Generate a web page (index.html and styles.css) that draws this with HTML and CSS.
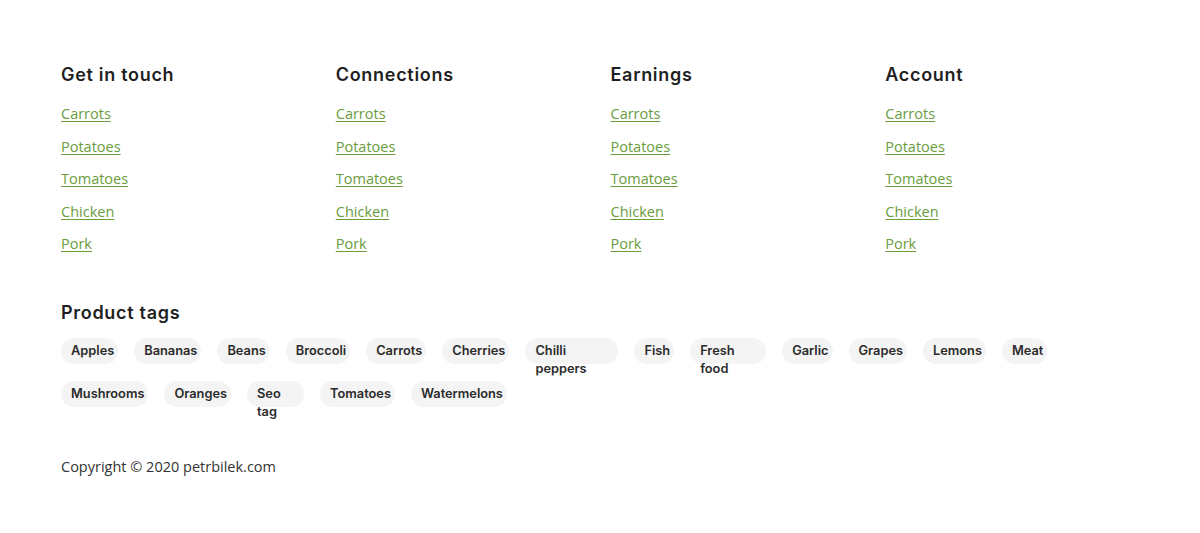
FILE: index.html
```html
<!DOCTYPE html>
<html lang="en">
<head>
<meta charset="utf-8">
<title>Footer</title>
<link rel="stylesheet" href="styles.css">
</head>
<body>
<footer class="footer">
  <div class="cols">
    <section class="col">
      <h3 class="col-title">Get in touch</h3>
      <ul class="links">
        <li><a href="#">Carrots</a></li>
        <li><a href="#">Potatoes</a></li>
        <li><a href="#">Tomatoes</a></li>
        <li><a href="#">Chicken</a></li>
        <li><a href="#">Pork</a></li>
      </ul>
    </section>
    <section class="col">
      <h3 class="col-title">Connections</h3>
      <ul class="links">
        <li><a href="#">Carrots</a></li>
        <li><a href="#">Potatoes</a></li>
        <li><a href="#">Tomatoes</a></li>
        <li><a href="#">Chicken</a></li>
        <li><a href="#">Pork</a></li>
      </ul>
    </section>
    <section class="col">
      <h3 class="col-title">Earnings</h3>
      <ul class="links">
        <li><a href="#">Carrots</a></li>
        <li><a href="#">Potatoes</a></li>
        <li><a href="#">Tomatoes</a></li>
        <li><a href="#">Chicken</a></li>
        <li><a href="#">Pork</a></li>
      </ul>
    </section>
    <section class="col">
      <h3 class="col-title">Account</h3>
      <ul class="links">
        <li><a href="#">Carrots</a></li>
        <li><a href="#">Potatoes</a></li>
        <li><a href="#">Tomatoes</a></li>
        <li><a href="#">Chicken</a></li>
        <li><a href="#">Pork</a></li>
      </ul>
    </section>
  </div>

  <section class="tags-block">
    <h3 class="tags-title">Product tags</h3>
    <div class="tag-row">
      <a class="tag" href="#">Apples</a>
      <a class="tag" href="#">Bananas</a>
      <a class="tag" href="#">Beans</a>
      <a class="tag" href="#">Broccoli</a>
      <a class="tag" href="#">Carrots</a>
      <a class="tag" href="#">Cherries</a>
      <a class="tag tag-wrap tag-w93" href="#">Chilli peppers</a>
      <a class="tag" href="#">Fish</a>
      <a class="tag tag-wrap tag-w76" href="#">Fresh food</a>
      <a class="tag" href="#">Garlic</a>
      <a class="tag" href="#">Grapes</a>
      <a class="tag" href="#">Lemons</a>
      <a class="tag" href="#">Meat</a>
    </div>
    <div class="tag-row">
      <a class="tag" href="#">Mushrooms</a>
      <a class="tag" href="#">Oranges</a>
      <a class="tag tag-wrap tag-w57" href="#">Seo tag</a>
      <a class="tag" href="#">Tomatoes</a>
      <a class="tag" href="#">Watermelons</a>
    </div>
  </section>

  <p class="copyright">Copyright © 2020 petrbilek.com</p>
</footer>
</body>
</html>
```

FILE: styles.css
```css
* { box-sizing: border-box; }

body {
  margin: 0;
  background: #ffffff;
  font-family: "Open Sans", "Liberation Sans", sans-serif;
  color: #333333;
}

.footer {
  padding: 61px 61px 0 61px;
}

.cols {
  display: grid;
  grid-template-columns: repeat(4, 274.75px);
}

.col-title,
.tags-title {
  margin: 0;
  font-family: Inter, "Liberation Sans", sans-serif;
  font-size: 18px;
  line-height: 27px;
  font-weight: 600;
  color: #1f1f1f;
  letter-spacing: 0.7px;
}

.col-title {
  margin-bottom: 16px;
}

.links {
  list-style: none;
  margin: 0;
  padding: 0;
  display: flex;
  flex-direction: column;
  gap: 12.6px;
}

.links li {
  line-height: 20px;
  font-size: 14.5px;
}

.links a {
  color: #6a9c3e;
  text-decoration: underline;
  text-underline-offset: 2px;
}

.tags-block {
  margin-top: 45px;
}

.tags-title {
  margin-bottom: 12px;
}

.tag-row {
  display: flex;
  align-items: flex-start;
}

.tag-row + .tag-row {
  margin-top: 1px;
}

.tag {
  flex: none;
  height: 26px;
  margin: 0 16px 16px 0;
  padding: 4px 4px 0 10px;
  border-radius: 13px;
  background: #f4f4f4;
  font-family: Inter, "Liberation Sans", sans-serif;
  font-size: 12.8px;
  line-height: 18px;
  font-weight: 600;
  color: #2b2b2b;
  text-decoration: none;
  white-space: nowrap;
}

.tag-wrap {
  white-space: normal;
}

.tag-w93 { width: 93px; }
.tag-w76 { width: 76px; }
.tag-w57 { width: 57px; }

.copyright {
  margin: 34px 0 0 0;
  font-size: 14.5px;
  line-height: 20px;
  color: #333333;
}
```
